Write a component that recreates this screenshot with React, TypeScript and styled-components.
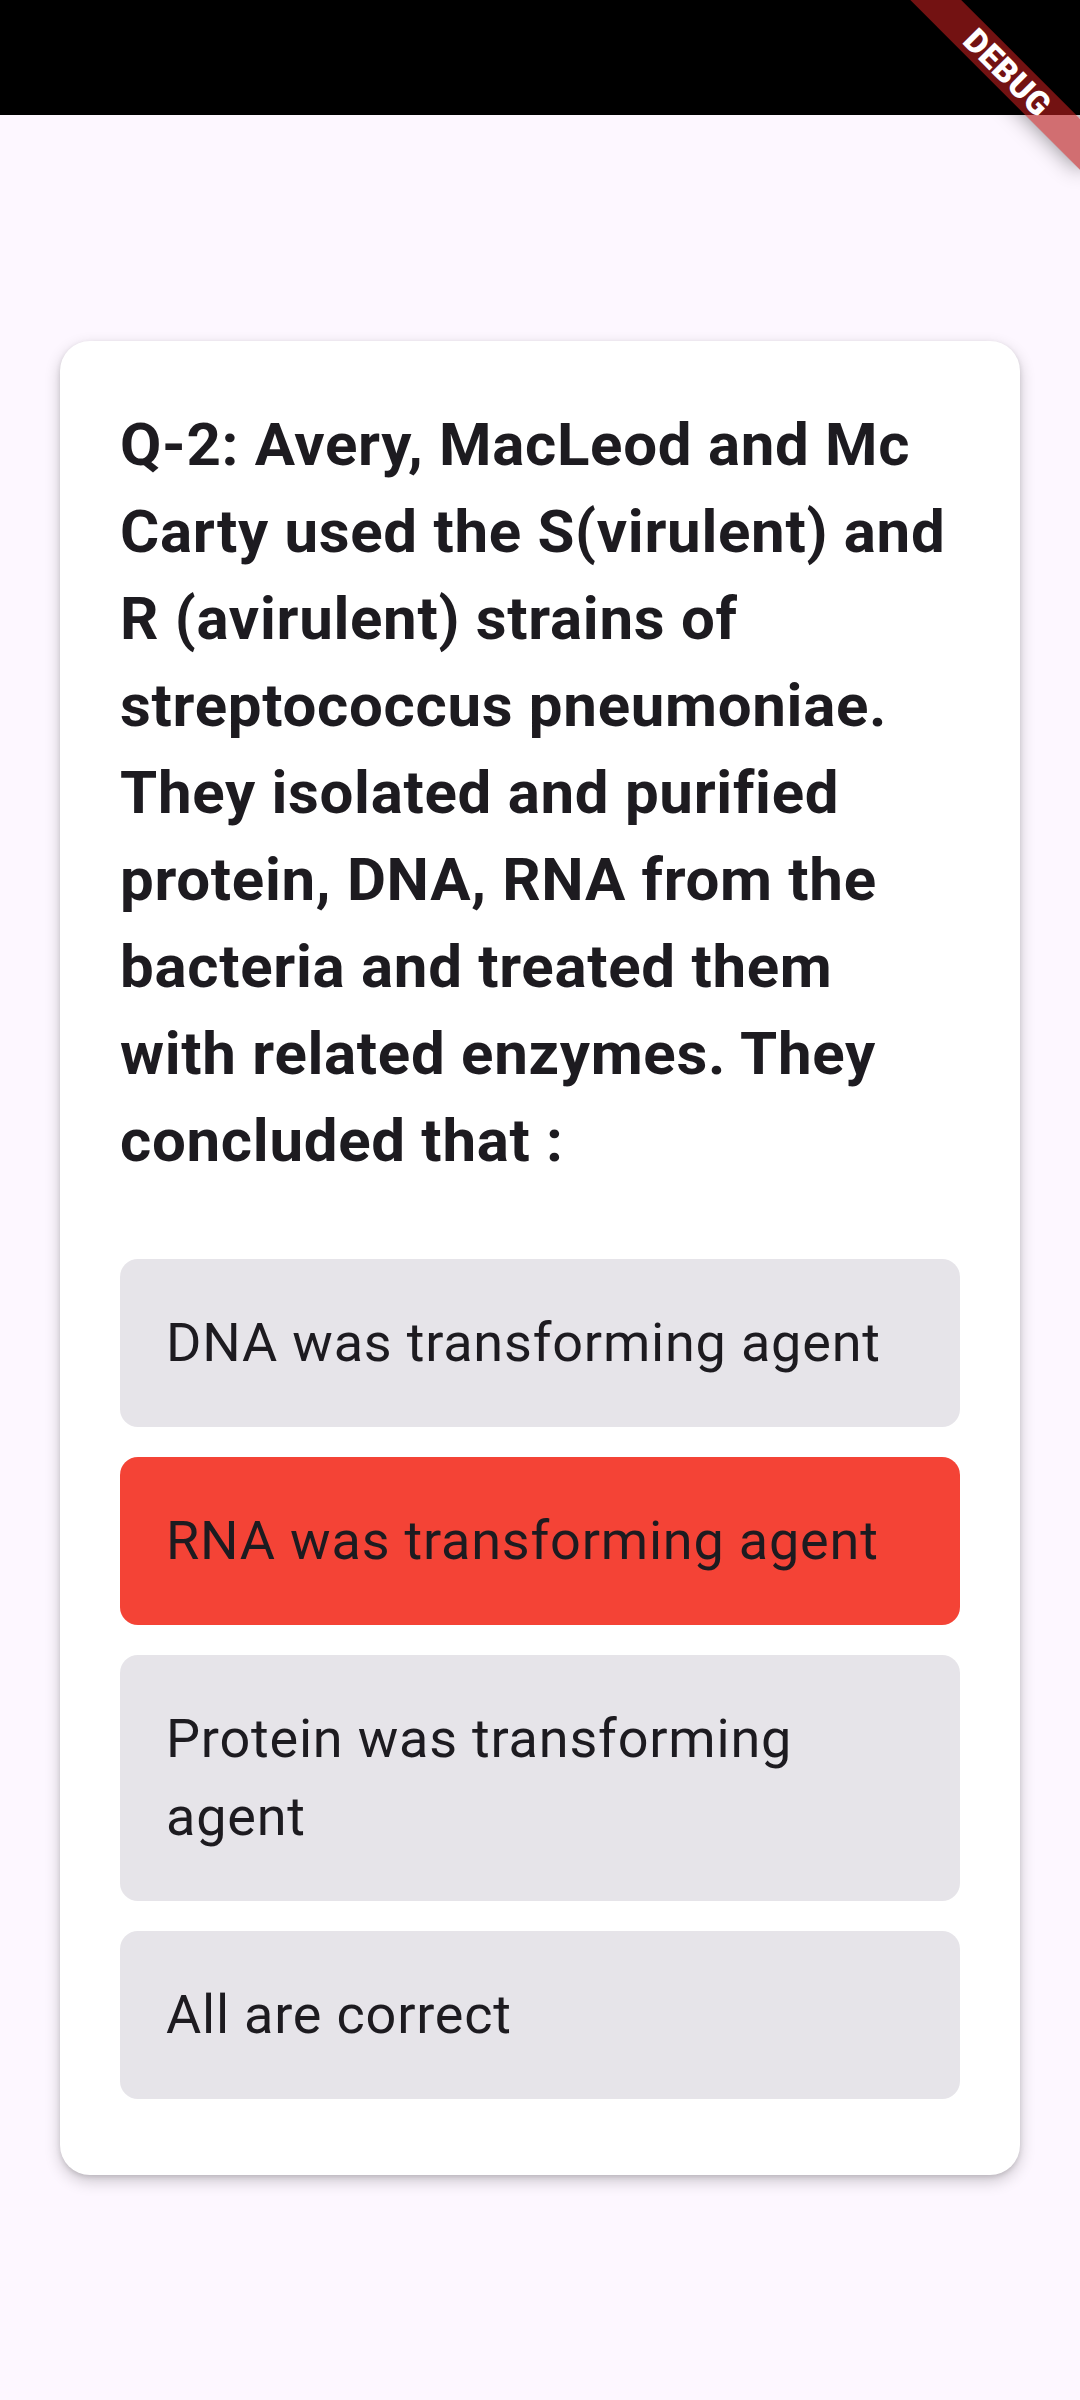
import React from "react";
import styled, { createGlobalStyle } from "styled-components";

const GlobalStyle = createGlobalStyle`
  html, body {
    margin: 0;
    padding: 0;
    background: #fdf7ff;
  }
  body {
    font-family: Roboto, "Noto Sans", "Liberation Sans", sans-serif;
    color: #1d1b20;
    -webkit-font-smoothing: antialiased;
  }
  * { box-sizing: border-box; }
`;

const Screen = styled.div`
  width: 1080px;
  height: 2400px;
  display: flex;
  flex-direction: column;
  background: #fdf7ff;
  position: relative;
  overflow: hidden;
`;

const StatusBar = styled.div`
  height: 115px;
  flex: none;
  background: #000000;
`;

const Body = styled.main`
  flex: 1;
  display: flex;
  flex-direction: column;
  justify-content: center;
  padding: 0 60px;
`;

const Card = styled.section`
  background: #ffffff;
  border-radius: 30px;
  padding: 60px 60px 76px;
  box-shadow: 0 6px 16px rgba(0, 0, 0, 0.2), 0 2px 5px rgba(0, 0, 0, 0.12);
  display: flex;
  flex-direction: column;
`;

const Question = styled.h1`
  margin: 0 0 75px;
  font-family: Roboto, "Noto Sans", sans-serif;
  font-weight: 700;
  font-size: 60px;
  line-height: 87px;
  letter-spacing: 0.7px;
  color: #1d1b20;
`;

const Options = styled.div`
  display: flex;
  flex-direction: column;
  gap: 30px;
`;

const Option = styled.div<{ $wrong?: boolean }>`
  background: ${(p) => (p.$wrong ? "#f44336" : "#e6e4e9")};
  border-radius: 18px;
  padding: 45px 46px;
  font-family: Roboto, "Noto Sans", sans-serif;
  font-weight: 400;
  font-size: 54px;
  line-height: 78px;
  letter-spacing: 0.8px;
  color: #1d1b20;
`;

const BannerPivot = styled.div`
  position: absolute;
  top: 0;
  right: 0;
  width: 0;
  height: 0;
  transform: rotate(45deg);
  transform-origin: 0 0;
  pointer-events: none;
`;

const Banner = styled.div`
  position: absolute;
  left: -120px;
  top: 84px;
  width: 240px;
  height: 36px;
  background: rgba(183, 28, 28, 0.627);
  box-shadow: 0 0 22px rgba(0, 0, 0, 0.45);
  display: flex;
  align-items: center;
  justify-content: center;
  color: #ffffff;
  font-family: Roboto, "Noto Sans", sans-serif;
  font-weight: 900;
  font-size: 33px;
  line-height: 33px;
  letter-spacing: 0.5px;
`;

const options = [
  { text: "DNA was transforming agent", wrong: false },
  { text: "RNA was transforming agent", wrong: true },
  { text: "Protein was transforming agent", wrong: false },
  { text: "All are correct", wrong: false },
];

export default function App() {
  return (
    <>
      <GlobalStyle />
      <Screen>
        <StatusBar />
        <Body>
          <Card>
            <Question>
              Q-2: Avery, MacLeod and Mc Carty used the S(virulent) and R
              (avirulent) strains of streptococcus pneumoniae. They isolated
              and purified protein, DNA, RNA from the bacteria and treated them
              with related enzymes. They concluded that :
            </Question>
            <Options>
              {options.map((o) => (
                <Option key={o.text} $wrong={o.wrong}>
                  {o.text}
                </Option>
              ))}
            </Options>
          </Card>
        </Body>
        <BannerPivot>
          <Banner>DEBUG</Banner>
        </BannerPivot>
      </Screen>
    </>
  );
}
